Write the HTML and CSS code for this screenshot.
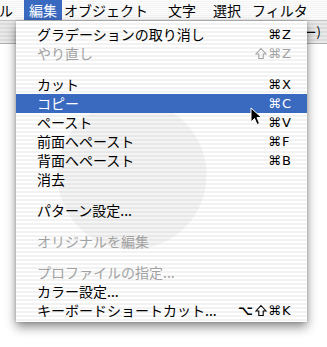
FILE: index.html
```html
<!DOCTYPE html>
<html lang="ja">
<head>
  <meta charset="UTF-8" />
  <title>編集メニュー</title>
  <link rel="stylesheet" href="styles.css">
</head>
<body>

  <!-- Menu bar -->
  <div class="menubar">
    <span class="mb-item first">ル</span>
    <span class="mb-item active">編集</span>
    <span class="mb-item">オブジェクト</span>
    <span class="mb-item">文字</span>
    <span class="mb-item">選択</span>
    <span class="mb-item">フィルタ</span>
  </div>

  <!-- Window behind (only the end of its title shows) -->
  <div class="window">
    <div class="titlebar"><span class="title">ー)</span></div>
  </div>

  <!-- Edit menu -->
  <div class="menu">
    <div class="item"><span class="label">グラデーションの取り消し</span><span class="key"><span class="mods">⌘</span><span class="ch">Z</span></span></div>
    <div class="item disabled"><span class="label">やり直し</span><span class="key"><svg class="shift" width="12" height="19" viewBox="0 0 12 19"><path d="M6 4.5 L11 10 L8.2 10 L8.2 14.5 L3.8 14.5 L3.8 10 L1 10 Z" fill="none" stroke="currentColor" stroke-width="1.1"/></svg><span class="mods">⌘</span><span class="ch">Z</span></span></div>
    <div class="sep"></div>
    <div class="item"><span class="label">カット</span><span class="key"><span class="mods">⌘</span><span class="ch">X</span></span></div>
    <div class="item selected"><span class="label">コピー</span><span class="key"><span class="mods">⌘</span><span class="ch">C</span></span></div>
    <div class="item"><span class="label">ペースト</span><span class="key"><span class="mods">⌘</span><span class="ch">V</span></span></div>
    <div class="item"><span class="label">前面へペースト</span><span class="key"><span class="mods">⌘</span><span class="ch">F</span></span></div>
    <div class="item"><span class="label">背面へペースト</span><span class="key"><span class="mods">⌘</span><span class="ch">B</span></span></div>
    <div class="item"><span class="label">消去</span></div>
    <div class="sep"></div>
    <div class="item"><span class="label">パターン設定...</span></div>
    <div class="sep"></div>
    <div class="item disabled"><span class="label">オリジナルを編集</span></div>
    <div class="sep"></div>
    <div class="item disabled"><span class="label">プロファイルの指定...</span></div>
    <div class="item"><span class="label">カラー設定...</span></div>
    <div class="item"><span class="label">キーボードショートカット...</span><span class="key"><span class="mods opt">⌥</span><svg class="shift" width="12" height="19" viewBox="0 0 12 19"><path d="M6 4.5 L11 10 L8.2 10 L8.2 14.5 L3.8 14.5 L3.8 10 L1 10 Z" fill="none" stroke="currentColor" stroke-width="1.1"/></svg><span class="mods">⌘</span><span class="ch">K</span></span></div>
  </div>

  <!-- Mouse pointer -->
  <svg class="cursor" width="14" height="20" viewBox="0 0 14 20">
    <path d="M1 1 L1 15 L4.5 11.5 L7 17.5 L9.5 16.5 L7 10.5 L11.5 10.5 Z" fill="#000" stroke="#fff" stroke-width="1"/>
  </svg>

</body>
</html>
```

FILE: styles.css
```css
body { margin: 0; width: 327px; height: 347px; overflow: hidden; position: relative; background: #fff; font-family: "Noto Sans CJK JP", "DejaVu Sans", sans-serif; font-size: 14px; color: #000; }

.menubar { display: flex; height: 21px; box-sizing: border-box; line-height: 20px; background: repeating-linear-gradient(#fdfdfd 0 1px, #f3f3f3 1px 2px); border-bottom: 1px solid #c4c4c4; white-space: nowrap; }
.mb-item { padding: 0 5px; }
.mb-item.first { padding-left: 0; margin-left: -1px; padding-right: 3px; }
.mb-item.active { margin-left: 8px; background: #3a69c0; color: #fff; }
.mb-item:nth-child(3) { padding-left: 2px; }
.mb-item:nth-child(4) { margin-left: 10px; }
.mb-item:nth-child(5) { margin-left: 7px; }
.mb-item:nth-child(6) { margin-left: 1px; }

.window { height: 326px; }
.titlebar { display: flex; justify-content: flex-end; height: 22px; line-height: 22px; padding-right: 6px; background: repeating-linear-gradient(#e9e9e9 0 2px, #dcdcdc 2px 4px); border-bottom: 1px solid #b0b0b0; font-size: 13px; }

.menu { position: absolute; left: 16px; top: 21px; width: 291px; padding: 4px 0 2px; box-sizing: border-box;
  background:
    radial-gradient(circle at 116px 154px, rgba(0,0,0,0.045) 0 74px, transparent 75px),
    repeating-linear-gradient(#ffffff 0 2px, #f2f2f2 2px 4px);
  box-shadow: 0 5px 10px rgba(0,0,0,0.45), 0 0 3px rgba(0,0,0,0.2); }
.item { display: flex; justify-content: space-between; height: 19px; line-height: 19px; padding: 0 15px 0 21px; white-space: nowrap; }
.item.disabled { color: #a2a2a2; }
.item.selected { background: #3a69c0; color: #fff; }
.sep { height: 12px; }

.key { display: flex; gap: 1px; }
.mods { font-family: "DejaVu Sans", sans-serif; font-size: 13px; }
.mods.opt { font-weight: bold; margin-right: 1px; }
.shift { display: block; }
.ch { display: inline-block; width: 10px; font-family: "DejaVu Sans", sans-serif; font-size: 13px; }

.cursor { position: absolute; left: 250px; top: 107px; }
```
